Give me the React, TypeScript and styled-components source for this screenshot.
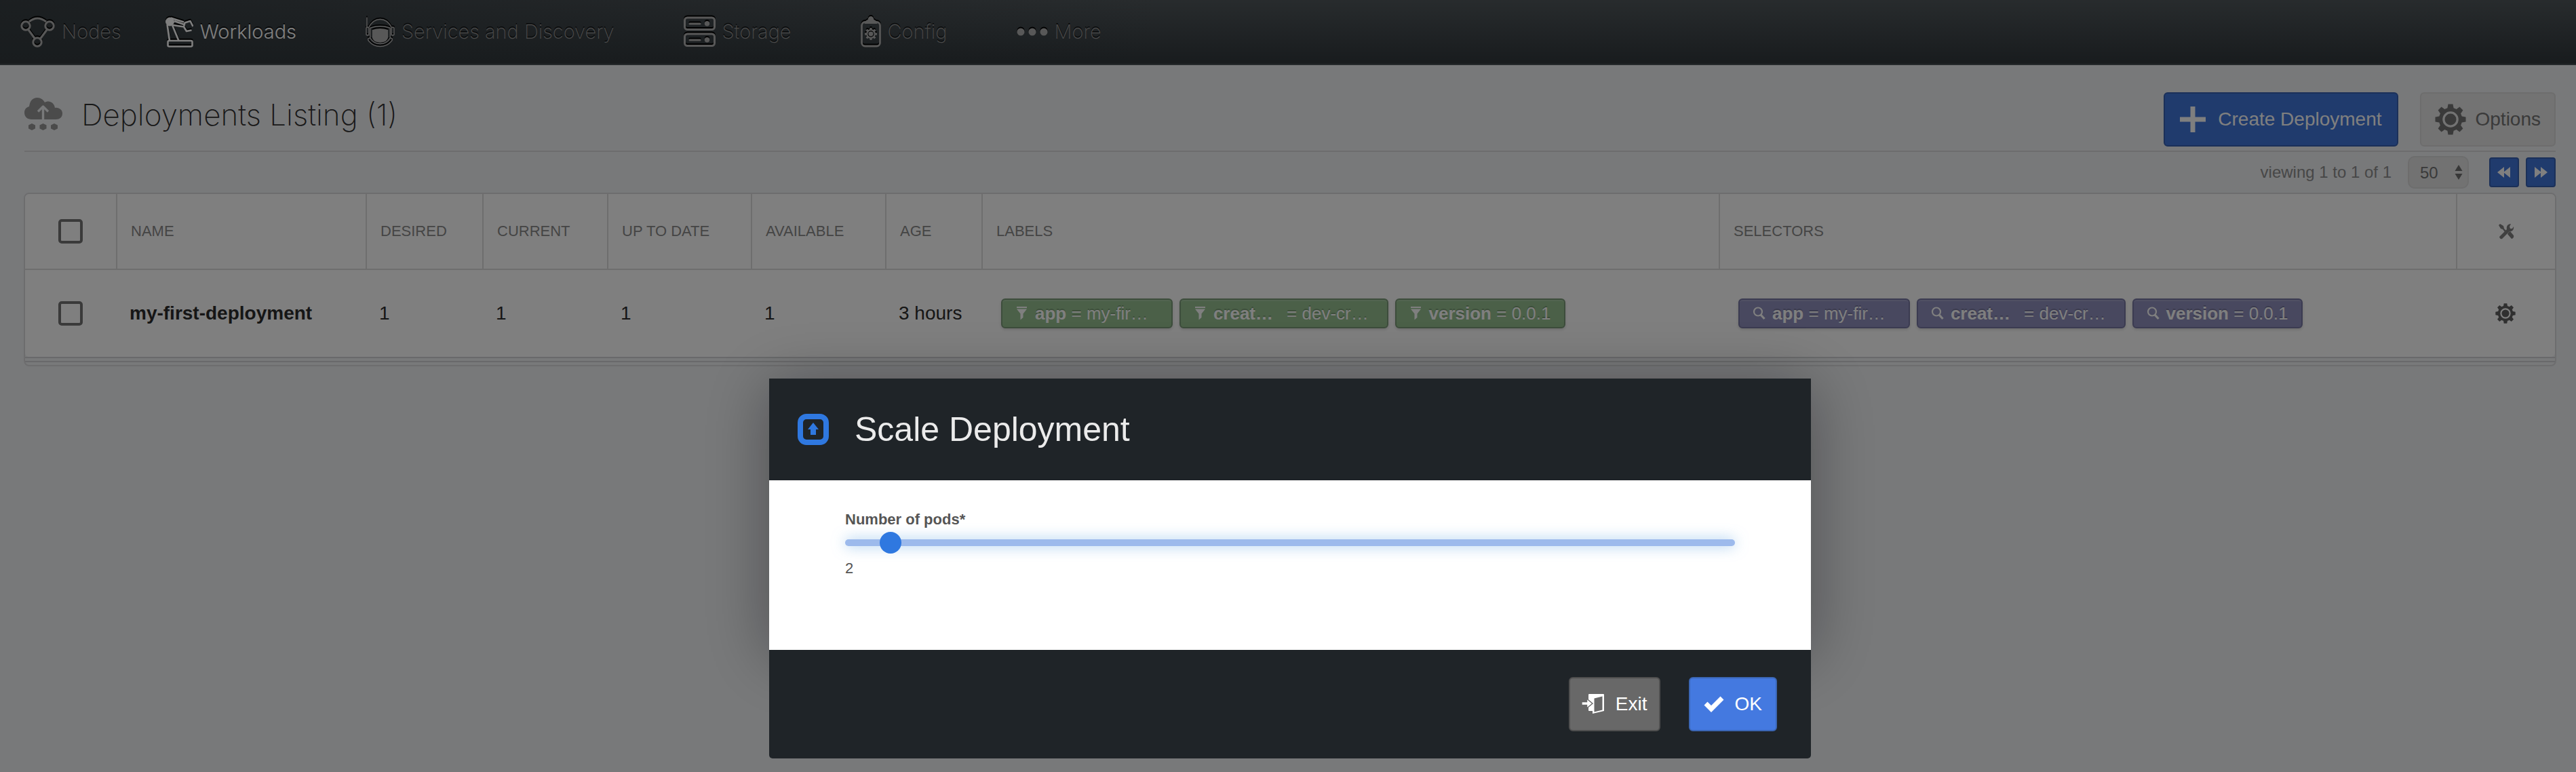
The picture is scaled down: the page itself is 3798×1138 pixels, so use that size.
import React, { useState } from 'react';
import styled, { createGlobalStyle, css } from 'styled-components';

const sans = '"Helvetica Neue", "Liberation Sans", Arial, sans-serif';
const light = 'Inter, "Liberation Sans", sans-serif';

const GlobalStyle = createGlobalStyle`
  *, *::before, *::after { box-sizing: border-box; }
  body { margin: 0; min-height: 100vh; background: #f0f2f5; font-family: ${sans}; color: #2c2c2c; }
  button, select, input { font-family: inherit; margin: 0; }
  svg { display: block; flex: none; }
`;

/* ---------- navigation ---------- */

const NavBar = styled.nav`
  border-bottom: 2px solid #4b5256;
  background:
    linear-gradient(90deg, rgba(50, 57, 61, 0.8), transparent 45%),
    linear-gradient(180deg, #50575b, #32393d 96%);
`;

const NavList = styled.ul`
  display: flex;
  align-items: center;
  height: 94px;
  margin: 0;
  padding: 0 30px;
  list-style: none;
`;

const NavItem = styled.li<{ $wide?: boolean }>`
  margin-right: ${p => (p.$wide ? 102 : 64)}px;
`;

const NavLink = styled.a<{ $active?: boolean }>`
  display: flex;
  align-items: center;
  gap: 10px;
  color: ${p => (p.$active ? '#ffffff' : '#929292')};
  font: ${p => (p.$active ? 300 : 200)} 29px/40px ${light};
  text-decoration: none;
  text-shadow: 0 -2px 0 rgba(0, 0, 0, 0.7);
  white-space: nowrap;

  svg {
    color: ${p => (p.$active ? '#ffffff' : '#b0b0b0')};
    filter: drop-shadow(0 -2px 0 #000);
  }
`;

/* ---------- page head ---------- */

const Main = styled.main`
  padding: 0 30px 0 36px;
`;

const PageHead = styled.header`
  display: flex;
  align-items: flex-start;
  gap: 32px;
  padding: 40px 0 6px;
  border-bottom: 2px solid #dadbdd;
`;

const PageTitle = styled.h1`
  display: flex;
  align-items: center;
  gap: 28px;
  flex: 1;
  height: 66px;
  margin: 0;
  color: #303030;
  font: 200 44px/60px ${light};
`;

const tones = {
  primary: css`background: #4076da; border-color: #3660b2; color: #fff;`,
  plain: css`background: #e6e6e6; border-color: #dadada; color: #747474;`,
  dark: css`background: #686868; border-color: #4f4f4f; color: #fff;`,
  confirm: css`background: #4479e0; border-color: #3b66b4; color: #fff;`,
};

const Button = styled.button<{ $tone: keyof typeof tones; $pad?: number; $gap?: number }>`
  display: flex;
  align-items: center;
  gap: ${p => p.$gap ?? 18}px;
  height: 80px;
  padding: 0 ${p => p.$pad ?? 20}px;
  border: 2px solid;
  border-radius: 6px;
  font-size: 28px;
  white-space: nowrap;
  ${p => tones[p.$tone]}
`;

/* ---------- pager ---------- */

const Pager = styled.div`
  display: flex;
  align-items: center;
  justify-content: flex-end;
  height: 60px;
  color: #8e8e8e;
  font-size: 24px;
`;

const PageSize = styled.div`
  display: grid;
  align-items: center;
  width: 90px;
  margin: 0 30px 0 24px;

  > * { grid-area: 1 / 1; }
  svg { justify-self: end; margin-right: 9px; pointer-events: none; color: #707070; }
`;

const SizeSelect = styled.select`
  appearance: none;
  width: 100%;
  height: 48px;
  padding: 0 16px;
  border: 2px solid #dadada;
  border-radius: 10px;
  background: #e4e4e4;
  color: #747474;
  font-size: 24px;
`;

const PageButton = styled.button`
  display: grid;
  place-items: center;
  width: 44px;
  height: 44px;
  padding: 0;
  border: 2px solid #3660b2;
  border-radius: 4px;
  background: #4076da;
  color: #fff;

  & + & { margin-left: 10px; }
`;

/* ---------- table ---------- */

const TableFrame = styled.section`
  margin: 0 -1px;
  padding-bottom: 4px;
  border: 2px solid #dadbdd;
  border-radius: 8px;
`;

const Table = styled.table`
  width: 100%;
  table-layout: fixed;
  border-spacing: 0;
  border-radius: 6px;
  background: #fff;
`;

const Col = styled.col<{ $w?: number }>`
  width: ${p => (p.$w ? `${p.$w}px` : 'auto')};
`;

const Th = styled.th`
  height: 112px;
  padding: 0 0 0 20px;
  border-bottom: 2px solid #dcdcdc;
  color: #8a8a8a;
  font-size: 22px;
  font-weight: 400;
  text-align: left;
  white-space: nowrap;

  & + & { border-left: 2px solid #dcdcdc; }
`;

const Td = styled.td<{ $bold?: boolean; $chips?: boolean }>`
  height: 128px;
  padding: 0 0 0 ${p => (p.$chips ? 29 : 20)}px;
  font-size: 28px;
  font-weight: ${p => (p.$bold ? 700 : 400)};
  white-space: nowrap;
`;

const Centered = styled.div`
  display: flex;
  justify-content: center;
  margin-left: -20px;
`;

const TableFoot = styled.div`
  height: 8px;
  border-top: 2px solid #d2d3d6;
  border-bottom: 2px solid #d2d3d6;
`;

const CheckBox = styled.input`
  appearance: none;
  width: 36px;
  height: 36px;
  border: 4px solid #747474;
  border-radius: 5px;
`;

const IconButton = styled.button`
  display: block;
  padding: 0;
  border: 0;
  background: none;
  color: #606060;
`;

const ChipList = styled.div`
  display: flex;
  gap: 10px;
`;

const Chip = styled.span<{ $kind: 'label' | 'selector' }>`
  display: flex;
  align-items: center;
  height: 44px;
  padding: 0 20px 0 18px;
  border: 2px solid ${p => (p.$kind === 'label' ? '#7a9a78' : '#7676a2')};
  border-radius: 6px;
  background: ${p => (p.$kind === 'label' ? '#96c090' : '#9090be')};
  box-shadow: inset 0 2px 0 rgba(255, 255, 255, 0.15), 0 2px 4px rgba(0, 0, 0, 0.15);
  color: #fff;
  font-size: 26px;
  text-shadow: 0 -2px 0 rgba(0, 0, 0, 0.2);
  white-space: pre;

  svg { margin-right: 10px; }
`;

const ChipKey = styled.b<{ $cut?: boolean }>`
  min-width: ${p => (p.$cut ? 101 : 0)}px;
`;

const ChipValue = styled.span<{ $cut?: boolean }>`
  min-width: ${p => (p.$cut ? 105 : 0)}px;
`;

/* ---------- dialog ---------- */

const Overlay = styled.div`
  position: fixed;
  inset: 0;
  display: flex;
  align-items: flex-end;
  justify-content: center;
  padding: 20px 0 20px 6px;
  background: rgba(0, 0, 0, 0.5);
`;

const Dialog = styled.div`
  width: min(1536px, 100%);
`;

const DialogTop = styled.div`
  box-shadow: 0 10px 90px rgba(0, 0, 0, 0.35);
`;

const DialogHead = styled.header`
  display: flex;
  align-items: center;
  gap: 38px;
  height: 150px;
  padding: 0 42px;
  background: #1f2428;
`;

const DialogTitle = styled.h2`
  margin: 0;
  color: #ebebeb;
  font-size: 50px;
  font-weight: 400;
`;

const DialogBody = styled.div`
  min-height: 250px;
  padding: 44px 112px;
  background: #fff;
  color: #555;
  font-size: 22px;
  line-height: 28px;
`;

const FieldLabel = styled.label`
  display: block;
  margin-bottom: 4px;
  font-weight: 700;
`;

const Slider = styled.input`
  appearance: none;
  display: block;
  width: 100%;
  height: 32px;
  background: none;

  &::-webkit-slider-runnable-track {
    height: 10px;
    border-radius: 5px;
    background: #9dbaec;
    box-shadow: 0 0 20px rgba(90, 160, 225, 0.6);
  }
  &::-webkit-slider-thumb {
    appearance: none;
    width: 32px;
    height: 32px;
    margin-top: -11px;
    border-radius: 50%;
    background: #2f78e0;
  }
`;

const SliderValue = styled.output`
  display: block;
  margin-top: 8px;
`;

const DialogFoot = styled.footer`
  position: relative;
  display: flex;
  align-items: center;
  justify-content: flex-end;
  gap: 42px;
  height: 160px;
  padding: 0 50px;
  border-radius: 0 0 5px 5px;
  background: #1f2428;
`;

/* ---------- icons ---------- */

const stroke = { fill: 'none', stroke: 'currentColor', strokeWidth: 3, strokeLinejoin: 'round' as const };

const NodesIcon = () => (
  <svg width="51" height="46" viewBox="0 0 51 46" {...stroke}>
    <circle cx="8" cy="14" r="6.2" /><circle cx="43" cy="14" r="6.2" /><circle cx="25" cy="38" r="6.2" />
    <path d="M13 8Q25-2 38 8M12 20l9.500 13M39 20l-9.500 13" />
  </svg>
);

const RobotArmIcon = () => (
  <svg width="42" height="46" viewBox="0 0 42 46" {...stroke} strokeWidth="2.600">
    <circle cx="7.500" cy="8" r="6.500" fill="currentColor" stroke="none" />
    <path d="M3.500 12l3.500 24M11 13l9.500 23M9 2.500l19 6M12 13l16 2.500M14 7l14 5M28 15.500l1.500-6 8-2.500 4 8M28 15.500l4 6.500 7.500-1.500" />
    <rect x="4.500" y="36" width="36" height="8.500" rx="2" />
  </svg>
);

const HelmetIcon = () => (
  <svg width="43" height="46" viewBox="0 0 44 46" {...stroke} strokeWidth="1.600">
    <path d="M2 1v15M5 16C9 8 15 4 22 4s13 4 17 12" />
    <rect x="1" y="16" width="4" height="12" rx="1.500" /><rect x="39" y="16" width="4" height="12" rx="1.500" />
    <path d="M7 32V17q15-5 30 0v15M4 33q-1 2 1 4 7 8 17 8t17-8q2-2 1-4l-3-1q-5 9-15 9T7 32z" />
    <path d="M10 20q12-4 24 0v11q-1 8-12 8T10 31z" fill="currentColor" stroke="none" />
  </svg>
);

const StorageIcon = () => (
  <svg width="47" height="46" viewBox="0 0 47 46" {...stroke}>
    <rect x="1.500" y="2" width="44" height="17.500" rx="4" /><rect x="1.500" y="26" width="44" height="17.500" rx="4" />
    <path d="M9 11h15M9 35h15" strokeLinecap="round" />
    <circle cx="34.500" cy="10.800" r="3.700" fill="currentColor" stroke="none" />
    <circle cx="34.500" cy="34.800" r="3.700" fill="currentColor" stroke="none" />
  </svg>
);

const gearTeeth = [0, 45, 90, 135, 180, 225, 270, 315];

const GearShape = () => (
  <g fill="none" stroke="currentColor">
    <circle r="14.500" strokeWidth="5.500" />
    <circle r="8.500" fill="currentColor" stroke="none" />
    {gearTeeth.map(a => (
      <path key={a} d="M-4.800-15.500l1.300-7h7l1.300 7z" fill="currentColor" stroke="none" transform={`rotate(${a})`} />
    ))}
  </g>
);

const GearIcon = ({ size }: { size: number }) => (
  <svg width={size} height={size} viewBox="-23 -23 46 46"><GearShape /></svg>
);

const ConfigIcon = () => (
  <svg width="30" height="46" viewBox="0 0 30 46" {...stroke} strokeWidth="2.800">
    <rect x="1.500" y="8.500" width="27" height="35.500" rx="5" />
    <path d="M5.500 11q1-5 5-6 1-5 4.500-5t4.500 5q4 1 5 6z" fill="currentColor" stroke="none" />
    <g transform="translate(15 26) scale(0.400)"><GearShape /></g>
  </svg>
);

const MoreIcon = () => (
  <svg width="46" height="12" viewBox="0 0 46 12" fill="currentColor">
    <circle cx="6" cy="6" r="5.500" /><circle cx="23" cy="6" r="5.500" /><circle cx="40" cy="6" r="5.500" />
  </svg>
);

const CloudIcon = () => (
  <svg width="56" height="50" viewBox="0 0 56 50" fill="#969696">
    <path d="M11 32C4 32 0 28 0 22c0-5 3-8 7-9C8 5 12 0 19 0c5 0 9 3 11 7 6-4 14 0 15 8 6-1 11 3 11 8 0 6-4 9-10 9z" />
    <path d="M27.500 34V15M20 20.500l7.500-7.500 7.500 7.500" fill="none" stroke="#f0f2f5" strokeWidth="3.400" strokeLinejoin="round" />
    <path d="M11 38l5 2.500v5L11 48l-5-2.500v-5zM27.500 38l5 2.500v5l-5 2.500-5-2.500v-5zM44 38l5 2.500v5L44 48l-5-2.500v-5z" />
  </svg>
);

const PlusIcon = () => (
  <svg width="38" height="38" viewBox="0 0 38 38" fill="currentColor"><path d="M15.500 0h7v15.500H38v7H22.500V38h-7V22.500H0v-7h15.500z" /></svg>
);

const UpDownIcon = () => (
  <svg width="12" height="22" viewBox="0 0 12 22" fill="currentColor"><path d="M6 0l5.500 9H.500zM6 22L.500 13h11z" /></svg>
);

const RewindIcon = () => (
  <svg width="20" height="16" viewBox="0 0 20 16" fill="currentColor"><path d="M10 0v16L0 8zM19 0v16L9 8z" /></svg>
);

const ForwardIcon = () => (
  <svg width="20" height="16" viewBox="0 0 20 16" fill="currentColor"><path d="M1 0v16l10-8zM10 0v16l10-8z" /></svg>
);

const ToolsIcon = () => (
  <svg width="24" height="24" viewBox="0 0 24 24" fill="#808080">
    <path d="M1 3l2-2 5 3 1 4 3 3-2 2-3-4-3-1zM14 16l2-3 2-1 5 6c1 2-1 5-3 5z" />
    <path d="M2 20L13 9c-1-4 1-8 6-8l-2 4 1 3 3 0 2-3c1 5-3 8-6 7L6 23q-3 1-4-3z" />
  </svg>
);

const FunnelIcon = () => (
  <svg width="20" height="20" viewBox="0 0 20 20" fill="currentColor"><path d="M3 0h15v2H3zM3 3.500h15l-5.500 7V16l-4 3.500v-9z" /></svg>
);

const SearchIcon = () => (
  <svg width="20" height="20" viewBox="0 0 20 20" fill="none" stroke="currentColor">
    <circle cx="9" cy="7.500" r="6" strokeWidth="2.200" /><path d="M13 12l5.500 6" strokeWidth="3.200" />
  </svg>
);

const ScaleIcon = () => (
  <svg width="46" height="46" viewBox="0 0 46 46" fill="#2f78e0">
    <rect x="4" y="4" width="38" height="38" rx="9" fill="none" stroke="#2f78e0" strokeWidth="8" />
    <path d="M23 13l8 10h-4v8h-8v-8h-4z" />
  </svg>
);

const ExitIcon = () => (
  <svg width="34" height="30" viewBox="0 0 34 30">
    <path d="M10 1q0-1 1-1h21q1 0 1 1v24l-17 4v-4h-5q-1 0-1-1z" fill="#fff" />
    <path d="M18.500 6.500l12-3v20l-12 3z" fill="#686868" />
    <path d="M0 11.500h7.500V7l8.500 7-8.500 7v-4.500H0z" fill="#fff" stroke="#686868" strokeWidth="1.400" />
  </svg>
);

const CheckIcon = () => (
  <svg width="30" height="24" viewBox="0 0 30 24"><path d="M3 11l8 8L27 3" fill="none" stroke="#fff" strokeWidth="7" /></svg>
);

/* ---------- data ---------- */

const nav = [
  { text: 'Nodes', icon: <NodesIcon /> },
  { text: 'Workloads', icon: <RobotArmIcon />, active: true },
  { text: 'Services and Discovery', icon: <HelmetIcon /> },
  { text: 'Storage', icon: <StorageIcon /> },
  { text: 'Config', icon: <ConfigIcon /> },
  { text: 'More', icon: <MoreIcon /> },
];

const columns = [
  { text: 'NAME', w: 368 },
  { text: 'DESIRED', w: 172 },
  { text: 'CURRENT', w: 184 },
  { text: 'UP TO DATE', w: 212 },
  { text: 'AVAILABLE', w: 198 },
  { text: 'AGE', w: 142 },
  { text: 'LABELS' },
  { text: 'SELECTORS' },
];

const tags = [
  { name: 'app', value: 'my-fir…', cutValue: true },
  { name: 'creat…', value: 'dev-cr…', cutName: true, cutValue: true },
  { name: 'version', value: '0.0.1' },
];

const Tags = ({ kind }: { kind: 'label' | 'selector' }) => (
  <ChipList>
    {tags.map(t => (
      <Chip key={t.name} $kind={kind}>
        {kind === 'label' ? <FunnelIcon /> : <SearchIcon />}
        <ChipKey $cut={t.cutName}>{t.name}</ChipKey>
        <span> = </span>
        <ChipValue $cut={t.cutValue}>{t.value}</ChipValue>
      </Chip>
    ))}
  </ChipList>
);

export default function App() {
  const [pods, setPods] = useState(2);

  return (
    <>
      <GlobalStyle />
      <NavBar>
        <NavList>
          {nav.map((n, i) => (
            <NavItem key={n.text} $wide={i > 0}>
              <NavLink href="#" $active={n.active}>{n.icon}{n.text}</NavLink>
            </NavItem>
          ))}
        </NavList>
      </NavBar>

      <Main>
        <PageHead>
          <PageTitle><CloudIcon />Deployments Listing (1)</PageTitle>
          <Button $tone="primary" $pad={22}><PlusIcon />Create Deployment</Button>
          <Button $tone="plain" $gap={14}><GearIcon size={46} />Options</Button>
        </PageHead>

        <Pager>
          <span>viewing 1 to 1 of 1</span>
          <PageSize>
            <SizeSelect aria-label="Rows per page" defaultValue="50">
              <option>50</option>
              <option>100</option>
            </SizeSelect>
            <UpDownIcon />
          </PageSize>
          <PageButton aria-label="Previous page"><RewindIcon /></PageButton>
          <PageButton aria-label="Next page"><ForwardIcon /></PageButton>
        </Pager>

        <TableFrame>
          <Table>
            <colgroup>
              <Col $w={134} />
              {columns.map(c => <Col key={c.text} $w={c.w} />)}
              <Col $w={146} />
            </colgroup>
            <thead>
              <tr>
                <Th><Centered><CheckBox type="checkbox" aria-label="Select all" /></Centered></Th>
                {columns.map(c => <Th key={c.text}>{c.text}</Th>)}
                <Th><Centered><ToolsIcon /></Centered></Th>
              </tr>
            </thead>
            <tbody>
              <tr>
                <Td><Centered><CheckBox type="checkbox" aria-label="Select my-first-deployment" /></Centered></Td>
                <Td $bold>my-first-deployment</Td>
                <Td>1</Td>
                <Td>1</Td>
                <Td>1</Td>
                <Td>1</Td>
                <Td>3 hours</Td>
                <Td $chips><Tags kind="label" /></Td>
                <Td $chips><Tags kind="selector" /></Td>
                <Td><Centered><IconButton aria-label="Row actions"><GearIcon size={30} /></IconButton></Centered></Td>
              </tr>
            </tbody>
          </Table>
          <TableFoot />
        </TableFrame>
      </Main>

      <Overlay>
        <Dialog role="dialog" aria-labelledby="dialog-title">
          <DialogTop>
            <DialogHead>
              <ScaleIcon />
              <DialogTitle id="dialog-title">Scale Deployment</DialogTitle>
            </DialogHead>
            <DialogBody>
              <FieldLabel htmlFor="pods">Number of pods*</FieldLabel>
              <Slider
                id="pods"
                type="range"
                min={0}
                max={50}
                value={pods}
                onChange={e => setPods(Number(e.target.value))}
              />
              <SliderValue htmlFor="pods">{pods}</SliderValue>
            </DialogBody>
          </DialogTop>
          <DialogFoot>
            <Button $tone="dark" $pad={17} $gap={16}><ExitIcon />Exit</Button>
            <Button $tone="confirm" $gap={16}><CheckIcon />OK</Button>
          </DialogFoot>
        </Dialog>
      </Overlay>
    </>
  );
}
